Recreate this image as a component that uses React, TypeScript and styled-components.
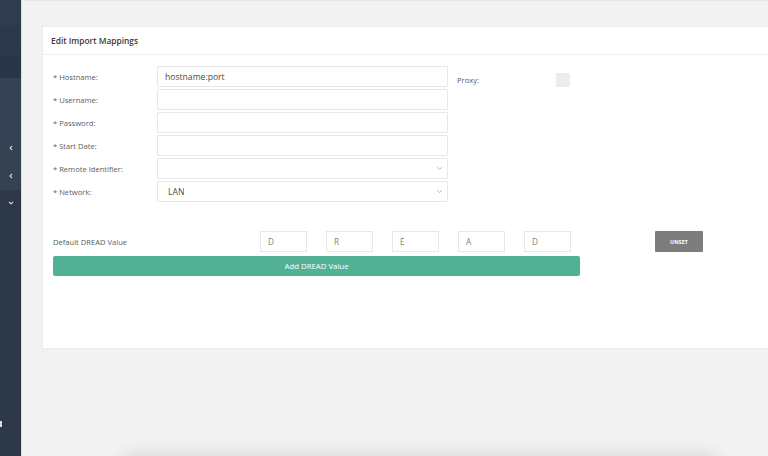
import React from 'react';
import styled, { createGlobalStyle } from 'styled-components';

const GlobalStyle = createGlobalStyle`
  html, body {
    margin: 0;
    padding: 0;
    height: 100%;
    overflow: hidden;
  }
  body {
    font-family: "Open Sans", "Liberation Sans", sans-serif;
    background: #f2f2f2;
  }
`;

const Page = styled.div`
  display: flex;
  width: 768px;
  height: 456px;
  overflow: hidden;
`;

const Sidebar = styled.nav`
  display: flex;
  flex-direction: column;
  width: 21px;
  flex: none;
  background: #2c3848;
  border-right: 1px solid #dcdcdc;
  color: #d6dbe2;
`;

const SideBand = styled.div<{ h: number; bg: string }>`
  display: flex;
  flex-direction: column;
  height: ${p => p.h}px;
  background: ${p => p.bg};
  flex: none;
`;

const SideItem = styled.div<{ h?: number }>`
  display: flex;
  align-items: center;
  justify-content: center;
  height: ${p => p.h ?? 28}px;
  width: 100%;
`;

const SideFill = styled.div`
  flex: 1;
  display: flex;
  flex-direction: column;
  justify-content: flex-end;
  padding-bottom: 28px;
`;

const Main = styled.main`
  flex: 1;
  display: flex;
  flex-direction: column;
  position: relative;
  overflow: hidden;
  border-top: 1px solid #e6e6e6;
  padding: 25px 0 0 20px;
`;

const Card = styled.section`
  width: 760px;
  height: 321px;
  background: #ffffff;
  border: 1px solid #ececec;
  border-right: none;
  flex: none;
`;

const CardHeader = styled.header`
  height: 27px;
  display: flex;
  align-items: center;
  padding-left: 8px;
  border-bottom: 1px solid #efefef;
  font-size: 8.4px;
  font-weight: 600;
  color: #3a3a3a;
`;

const CardBody = styled.div`
  padding: 11px 0 0 10px;
`;

const FormTop = styled.div`
  display: flex;
`;

const Fields = styled.div`
  display: flex;
  flex-direction: column;
  gap: 2px;
`;

const Row = styled.div`
  display: flex;
  align-items: center;
`;

const Label = styled.label<{ w: number }>`
  width: ${p => p.w}px;
  flex: none;
  font-size: 7.6px;
  color: #5c5c5c;
`;

const TextInput = styled.div`
  width: 291px;
  height: 21px;
  box-sizing: border-box;
  border: 1px solid #e7e7e7;
  border-radius: 1px;
  display: flex;
  align-items: center;
  padding-left: 7px;
  font-size: 8.6px;
  color: #4a4a4a;
`;

const Select = styled(TextInput)`
  justify-content: space-between;
  padding: 0 4px 0 10px;
`;

const ProxyBox = styled.div`
  display: flex;
  align-items: center;
  margin-left: 9px;
  height: 21px;
  margin-top: 3px;
`;

const Checkbox = styled.div`
  width: 14px;
  height: 14px;
  background: #ececec;
  border-radius: 1px;
`;

const DreadRow = styled.div`
  display: flex;
  align-items: center;
  margin-top: 29px;
`;

const DreadInputs = styled.div`
  display: flex;
  gap: 19px;
`;

const DreadInput = styled.div`
  width: 47px;
  height: 21px;
  box-sizing: border-box;
  border: 1px solid #e7e7e7;
  display: flex;
  align-items: center;
  padding-left: 7px;
  font-size: 8.2px;
  color: #808080;
`;

const UnsetButton = styled.button`
  margin-left: 84px;
  width: 48px;
  height: 21px;
  border: none;
  border-radius: 1px;
  background: #7d7d7d;
  color: #fff;
  font-family: inherit;
  font-size: 5.4px;
  font-weight: 700;
  letter-spacing: 0.1px;
  padding: 0;
`;

const AddButton = styled.button`
  margin-top: 2px;
  width: 527px;
  height: 20px;
  border: none;
  border-radius: 2px;
  background: #52b195;
  color: #fff;
  font-family: inherit;
  font-size: 7.8px;
  padding: 0;
`;

const FooterCard = styled.div`
  position: absolute;
  left: 100px;
  top: 462px;
  width: 596px;
  height: 40px;
  background: #cfcfcf;
  border-radius: 16px;
  box-shadow: 0 0 16px 10px rgba(0, 0, 0, 0.1);
`;

const Chevron = ({ dir, size = 6 }: { dir: 'left' | 'down'; size?: number }) => (
  <svg width={size} height={size} viewBox="0 0 10 10" fill="none" stroke="currentColor" strokeWidth="1.8" strokeLinecap="round" strokeLinejoin="round">
    {dir === 'left' ? <path d="M6.5 2 L3.5 5 L6.5 8" /> : <path d="M2 3.5 L5 6.5 L8 3.5" />}
  </svg>
);

const SelectArrow = () => (
  <svg width="7" height="7" viewBox="0 0 10 10" fill="none" stroke="#9a9a9a" strokeWidth="1" strokeLinecap="round">
    <path d="M2 3.5 L5 6.5 L8 3.5" />
  </svg>
);

const fields: { label: string; value?: string; select?: boolean }[] = [
  { label: '* Hostname:', value: 'hostname:port' },
  { label: '* Username:' },
  { label: '* Password:' },
  { label: '* Start Date:' },
  { label: '* Remote Identifier:', select: true },
  { label: '* Network:', value: 'LAN', select: true },
];

export default function App() {
  return (
    <>
      <GlobalStyle />
      <Page>
        <Sidebar>
          <SideBand h={26} bg="#2f3c4d" />
          <SideBand h={29} bg="#2b394b" />
          <SideBand h={23} bg="#283647" />
          <SideBand h={112} bg="#344254">
            <SideItem h={56} />
            <SideItem><Chevron dir="left" /></SideItem>
            <SideItem><Chevron dir="left" /></SideItem>
          </SideBand>
          <SideItem h={26}><Chevron dir="down" /></SideItem>
          <SideFill>
            <SideItem h={8} style={{ justifyContent: 'flex-start' }}>
              <svg width="3" height="6" viewBox="0 0 3 6"><rect x="0" y="0" width="2" height="6" fill="#d6dbe2" /></svg>
            </SideItem>
          </SideFill>
        </Sidebar>
        <Main>
          <Card>
            <CardHeader>Edit Import Mappings</CardHeader>
            <CardBody>
              <FormTop>
                <Fields>
                  {fields.map(f => (
                    <Row key={f.label}>
                      <Label w={104}>{f.label}</Label>
                      {f.select ? (
                        <Select>
                          <span>{f.value ?? ''}</span>
                          <SelectArrow />
                        </Select>
                      ) : (
                        <TextInput>{f.value ?? ''}</TextInput>
                      )}
                    </Row>
                  ))}
                </Fields>
                <ProxyBox>
                  <Label w={99}>Proxy:</Label>
                  <Checkbox />
                </ProxyBox>
              </FormTop>
              <DreadRow>
                <Label w={207}>Default DREAD Value</Label>
                <DreadInputs>
                  {['D', 'R', 'E', 'A', 'D'].map((l, i) => (
                    <DreadInput key={i}>{l}</DreadInput>
                  ))}
                </DreadInputs>
                <UnsetButton>UNSET</UnsetButton>
              </DreadRow>
              <AddButton>Add DREAD Value</AddButton>
            </CardBody>
          </Card>
          <FooterCard />
        </Main>
      </Page>
    </>
  );
}
